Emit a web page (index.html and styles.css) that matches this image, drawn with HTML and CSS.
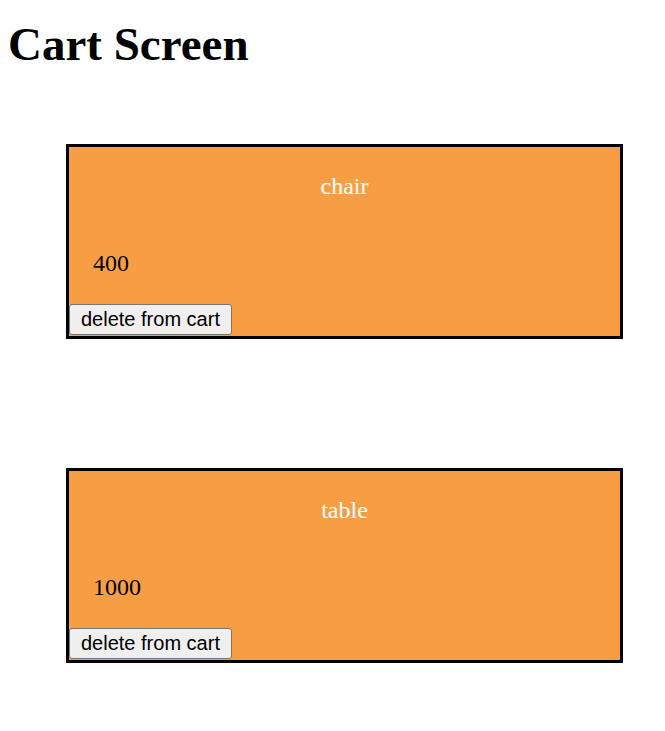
FILE: index.html
```html
<!DOCTYPE html>
<html lang="en">
<head>
    <meta charset="UTF-8">
    <meta name="viewport" content="width=device-width, initial-scale=1.0">
    <title>Cart Screen</title>
    <link rel="stylesheet" href="styles.css">
</head>
<body>
    <h1 class="page-title">Cart Screen</h1>

    <div class="cart-list">
        <div class="cart-item">
            <p class="item-name">chair</p>
            <p class="item-price">400</p>
            <button class="delete-button">delete from cart</button>
        </div>

        <div class="cart-item">
            <p class="item-name">table</p>
            <p class="item-price">1000</p>
            <button class="delete-button">delete from cart</button>
        </div>
    </div>
</body>
</html>
```

FILE: styles.css
```css
/* page */
body {
    margin: 8px;
    font-family: "Liberation Serif", "Times New Roman", serif;
    background: #ffffff;
    color: #000000;
}

.page-title {
    margin: 9px 0 0;
    font-size: 47px;
    font-weight: bold;
}

/* cart */
.cart-list {
    display: flex;
    flex-direction: column;
    gap: 129px;
    padding: 73px 0 0 58px;
}

.cart-item {
    width: 551px;
    border: 3px solid #000000;
    background: #f79e45;
    padding-bottom: 1px;
}

.item-name {
    margin: 26px 0 0;
    text-align: center;
    color: #ffffff;
    font-size: 24px;
}

.item-price {
    margin: 50px 0 0;
    padding-left: 24px;
    font-size: 24px;
}

.delete-button {
    display: block;
    margin-top: 27px;
    padding: 3px 11px;
    font-family: "Liberation Sans", Arial, sans-serif;
    font-size: 20px;
    color: #000000;
    background: #efefef;
    border: 1px solid #767676;
    border-radius: 3px;
}
```
